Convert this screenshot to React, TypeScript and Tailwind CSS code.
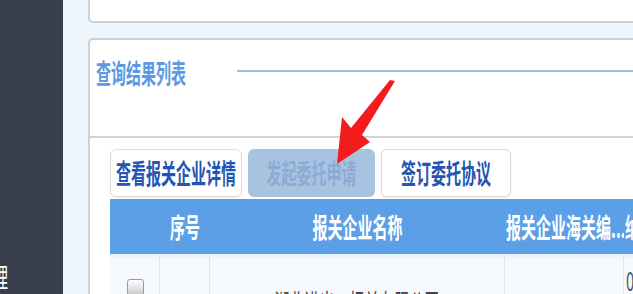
import React from "react";

const T = ({ children, className = "" }: { children: React.ReactNode; className?: string }) => (
  <span className={`inline-block origin-center scale-y-[1.8] whitespace-nowrap ${className}`}>{children}</span>
);

// red pointer drawn over the toolbar (coords are page coords via viewBox)
const Arrow = () => (
  <svg className="absolute left-[267px] top-[75px]" width="72" height="95" viewBox="330 75 72 95">
    <polygon
      points="395,81 362,135 370,142 337,164 342,117 351,128 390,80"
      fill="#f21c1c"
    />
  </svg>
);

export default function App() {
  return (
    <div className="flex h-[294px] w-[633px] overflow-hidden bg-[#eef6fd] font-['Noto_Sans_CJK_SC','Liberation_Sans',sans-serif]">
      <aside className="w-[63px] shrink-0 overflow-hidden bg-[#383e4b]">
        <div className="-ml-[22px] pt-[268px] text-[15px] leading-[18px] text-white">
          <T>管理</T>
        </div>
      </aside>

      <main className="relative min-w-0 flex-1 pl-[25px]">
        <div className="-mr-4 h-[23px] rounded-bl-[5px] border-b-2 border-l-2 border-[#cfcfcf] bg-white" />

        <section className="-mr-4 mt-[15px] h-[270px] rounded-tl-[5px] border-l-2 border-t-2 border-[#cfcfcf] bg-white">
          <div className="flex h-[66px] items-center pl-[6px]">
            <span className="text-[15px] font-semibold leading-[18px] text-[#5a9ae4]">
              <T>查询结果列表</T>
            </span>
            <div className="-mt-[4px] ml-[51px] h-[2px] flex-1 bg-[#94c0ea]" />
          </div>
          <div className="h-[30px]" />

          <div className="border-t-2 border-[#d4d4d4] pl-[20px] pt-[11px]">
            <div className="flex gap-[6px]">
              <button className="h-[48px] w-[132px] rounded-[6px] border border-[#dcdcdc] bg-white text-[15px] font-bold leading-[18px] text-[#2455b4] shadow-[0_1px_2px_rgba(0,0,0,0.08)]">
                <T>查看报关企业详情</T>
              </button>
              <button className="h-[48px] w-[127px] rounded-[6px] bg-[#a8c3df] text-[15px] font-bold leading-[18px] text-[#8cabd4]">
                <T>发起委托申请</T>
              </button>
              <button className="h-[48px] w-[130px] rounded-[6px] border border-[#dcdcdc] bg-white text-[15px] font-bold leading-[18px] text-[#2455b4] shadow-[0_1px_2px_rgba(0,0,0,0.08)]">
                <T>签订委托协议</T>
              </button>
            </div>

            <div className="mt-[2px] grid grid-cols-[50px_50px_295px_119px_100px] text-[15px] leading-[18px]">
              <div className="h-[55px] bg-[#5b9fe6]" />
              <div className="flex h-[55px] items-center justify-center bg-[#5b9fe6] font-bold text-white">
                <T>序号</T>
              </div>
              <div className="flex h-[55px] items-center justify-center bg-[#5b9fe6] font-bold text-white">
                <T>报关企业名称</T>
              </div>
              <div className="flex h-[55px] items-center overflow-hidden bg-[#5b9fe6] pl-[1px] font-bold text-white">
                <T>报关企业海关编...</T>
              </div>
              <div className="flex h-[55px] items-center bg-[#5b9fe6] pl-[1px] font-bold text-white">
                <T>纳税人识别号</T>
              </div>

              <div className="h-[60px] border-r border-t-[3px] border-[#e2e6ea] border-t-[#eaf2fb] bg-[#f5f9fd] pl-[17px] pt-[22px]">
                <div className="h-[17px] w-[17px] rounded-[3px] border border-[#9a9a9a] bg-gradient-to-b from-white to-[#c9c9c9]" />
              </div>
              <div className="h-[60px] border-r border-t-[3px] border-[#e2e6ea] border-t-[#eaf2fb] bg-[#f5f9fd]" />
              <div className="flex h-[60px] justify-center border-r border-t-[3px] border-[#e2e6ea] border-t-[#eaf2fb] bg-[#f5f9fd] pt-[38px] text-[#444]">
                <T>湖北进出口报关有限公司</T>
              </div>
              <div className="h-[60px] border-r border-t-[3px] border-[#e2e6ea] border-t-[#eaf2fb] bg-[#f5f9fd]" />
              <div className="h-[60px] border-t-[3px] border-t-[#eaf2fb] bg-[#f5f9fd] pl-[2px] pt-[14px] text-[#555]">
                <T>0</T>
              </div>
            </div>
          </div>
        </section>

        <Arrow />
      </main>
    </div>
  );
}
